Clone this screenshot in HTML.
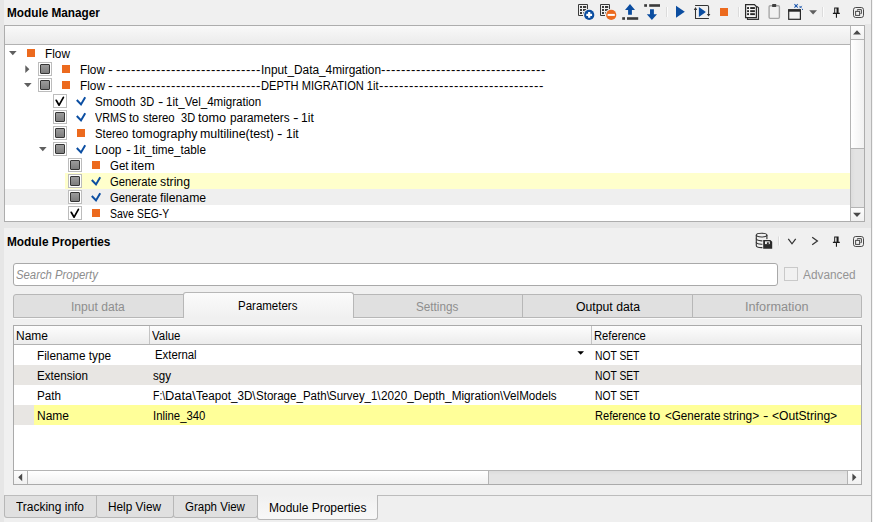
<!DOCTYPE html>
<html><head><meta charset="utf-8"><title>Module Manager</title>
<style>
html,body{margin:0;padding:0}
body{width:873px;height:522px;position:relative;overflow:hidden;background:#e6e6e6;font-family:"Liberation Sans",sans-serif;font-size:12px;color:#000}
div,span,svg,i{position:absolute;box-sizing:border-box}
.t{font-family:"Liberation Sans",sans-serif;font-size:12px;line-height:14px;height:14px;white-space:pre;transform-origin:0 0}
.dock{background:#f0f0f0}
.frame{border:1px solid #adadad;background:#fff}
.hdr{background:linear-gradient(#f9f9f9,#ebebeb);border-bottom:1px solid #b2b2b2}
.cb{width:14px;height:14px;border:1px solid #bcbcbc;background:#fff}
.cb i{left:1px;top:1px;width:10px;height:10px;border:1px solid #363636;border-radius:1px;background:linear-gradient(#9b9b9b,#7c7c7c)}
.or{width:8px;height:8px;background:#ec6a1e}
.sbtn{background:linear-gradient(#fdfdfd,#f1f1f1)}
.tab{background:#e0e0e0;border:1px solid #b7b7b7}

</style></head>
<body>
<!-- docks -->
<div class="dock" style="left:4px;top:0;width:867px;height:222px"></div>
<div class="dock" style="left:4px;top:228px;width:867px;height:267px"></div>
<div style="left:4px;top:495px;width:867px;height:1px;background:#bcbcbc"></div>
<div style="left:4px;top:496px;width:867px;height:26px;background:#efefef"></div>
<div style="left:871px;top:0;width:1px;height:522px;background:#b6b6b6"></div>
<div style="left:872px;top:0;width:1px;height:522px;background:#f4f4f4"></div>

<div style="left:865px;top:24px;width:6px;height:198px;background:#e7e7e7"></div>
<!-- tree frame -->
<div class="frame" style="left:4px;top:25px;width:861px;height:197px"></div>
<div class="hdr" style="left:5px;top:26px;width:845px;height:19px"></div>
<!-- tree row backgrounds -->
<div style="left:65px;top:173px;width:785px;height:16px;background:#ffffcc"></div>
<div style="left:5px;top:189px;width:845px;height:16px;background:#efefef"></div>
<!-- vertical scrollbar -->
<div style="left:850px;top:26px;width:1px;height:195px;background:#b4b4b4"></div>
<div class="sbtn" style="left:851px;top:26px;width:13px;height:13px"></div>
<div style="left:851px;top:39px;width:13px;height:1px;background:#b4b4b4"></div>
<div style="left:851px;top:40px;width:13px;height:108px;background:linear-gradient(90deg,#ffffff,#f1f1f1)"></div>
<div style="left:851px;top:148px;width:13px;height:1px;background:#b4b4b4"></div>
<div style="left:851px;top:149px;width:13px;height:58px;background:linear-gradient(90deg,#dcdcdc,#e3e3e3 4px)"></div>
<div style="left:851px;top:207px;width:13px;height:1px;background:#b4b4b4"></div>
<div class="sbtn" style="left:851px;top:208px;width:13px;height:13px"></div>
<svg style="left:851px;top:26px" width="13" height="195" viewBox="0 0 13 195"><path d="M2 8.4 L10 8.4 L6 4.2Z M2 186.8 L10 186.8 L6 191Z" fill="#4a4a4a"/></svg>
<!-- tree expanders -->
<svg style="left:5px;top:45px" width="60" height="176" viewBox="0 0 60 176">
 <g fill="#5f5f5f">
  <path d="M4 6 L11.6 6 L7.8 10.2Z"/>
  <path d="M20.3 20.3 L24.4 24.2 L20.3 28.1Z"/>
  <path d="M19 38 L26.6 38 L22.8 42.2Z"/>
  <path d="M34 102 L41.6 102 L37.8 106.2Z"/>
 </g>
</svg>
<!-- row 0 -->
<div class="or" style="left:27px;top:49px"></div>
<!-- row 1,2 -->
<div class="cb" style="left:38px;top:62px"><i></i></div><div class="or" style="left:62px;top:65px"></div>
<div class="cb" style="left:38px;top:78px"><i></i></div><div class="or" style="left:62px;top:81px"></div>
<!-- row 3..6 -->
<div class="cb" style="left:53px;top:94px"></div>
<div class="cb" style="left:53px;top:110px"><i></i></div>
<div class="cb" style="left:53px;top:126px"><i></i></div><div class="or" style="left:77px;top:129px"></div>
<div class="cb" style="left:53px;top:142px"><i></i></div>
<!-- row 7..10 -->
<div class="cb" style="left:68px;top:158px"><i></i></div><div class="or" style="left:92px;top:161px"></div>
<div class="cb" style="left:68px;top:174px"><i></i></div>
<div class="cb" style="left:68px;top:190px"><i></i></div>
<div class="cb" style="left:68px;top:206px"></div><div class="or" style="left:92px;top:209px"></div>
<!-- black check marks + blue check marks -->
<svg style="left:0;top:0" width="200" height="222" viewBox="0 0 200 222" fill="none" stroke-linecap="butt" stroke-linejoin="miter">
 <g stroke="#000" stroke-width="1.7" stroke-linecap="round" stroke-linejoin="round">
  <path d="M56.2 100.3 L59.1 105.2 L63.4 97.3"/>
  <path d="M71.2 212.3 L74.1 217.2 L78.4 209.3"/>
 </g>
 <g stroke="#0b4ea2" stroke-width="2">
  <path d="M76.8 100.0 L81.0 104.4 L85.2 97.2"/>
  <path d="M76.8 116.0 L81.0 120.4 L85.2 113.2"/>
  <path d="M76.8 148.0 L81.0 152.4 L85.2 145.2"/>
  <path d="M91.8 180.0 L96.0 184.4 L100.2 177.2"/>
  <path d="M91.8 196.0 L96.0 200.4 L100.2 193.2"/>
 </g>
</svg>
<!-- search box -->
<div style="left:13px;top:263px;width:765px;height:23px;border:1px solid #a9a9a9;border-radius:3px;background:#fff"></div>
<div style="left:784px;top:267px;width:14px;height:14px;border:1px solid #c9c9c9;background:#f1f1f1"></div>
<!-- property tabs -->
<div class="tab" style="left:13px;top:294px;width:171px;height:24px;border-radius:3px 0 0 0"></div>
<div class="tab" style="left:353px;top:294px;width:170px;height:24px;border-left-color:#c4c4c4"></div>
<div class="tab" style="left:522px;top:294px;width:171px;height:24px"></div>
<div class="tab" style="left:692px;top:294px;width:170px;height:24px;border-radius:0 3px 0 0"></div>
<div style="left:183px;top:292px;width:171px;height:26px;border:1px solid #b7b7b7;border-bottom:none;border-radius:3px 3px 0 0;background:linear-gradient(#fbfbfb,#f0f0f0)"></div>
<div style="left:13px;top:318px;width:170px;height:1px;background:#fafafa"></div>
<div style="left:354px;top:318px;width:508px;height:1px;background:#fafafa"></div>
<!-- table -->
<div class="frame" style="left:13px;top:325px;width:849px;height:160px;border-color:#aaa"></div>
<div class="hdr" style="left:14px;top:326px;width:847px;height:19px;background:linear-gradient(#fdfdfd,#ececec)"></div>
<div style="left:149px;top:326px;width:1px;height:18px;background:#c4c4c4"></div>
<div style="left:591px;top:326px;width:1px;height:18px;background:#c4c4c4"></div>
<div style="left:14px;top:365px;width:847px;height:20px;background:#e8e6e3"></div>
<div style="left:14px;top:405px;width:20px;height:20px;background:#e8e6e3"></div>
<div style="left:34px;top:405px;width:827px;height:20px;background:#ffff99"></div>
<svg style="left:576px;top:350px" width="10" height="6" viewBox="0 0 10 6"><path d="M1.4 1.2 L8 1.2 L4.7 4.8Z" fill="#000"/></svg>
<!-- horizontal scrollbar -->
<div style="left:14px;top:470px;width:847px;height:1px;background:#b4b4b4"></div>
<div class="sbtn" style="left:14px;top:471px;width:13px;height:13px"></div>
<div style="left:27px;top:471px;width:1px;height:13px;background:#b4b4b4"></div>
<div style="left:28px;top:471px;width:460px;height:13px;background:linear-gradient(#ffffff,#f1f1f1)"></div>
<div style="left:488px;top:471px;width:1px;height:13px;background:#b4b4b4"></div>
<div style="left:489px;top:471px;width:358px;height:13px;background:linear-gradient(#dcdcdc,#e4e4e4 4px)"></div>
<div style="left:847px;top:471px;width:1px;height:13px;background:#b4b4b4"></div>
<div class="sbtn" style="left:848px;top:471px;width:13px;height:13px"></div>
<svg style="left:14px;top:471px" width="847" height="13" viewBox="0 0 847 13"><path d="M8.2 2.4 L8.2 10.2 L4.2 6.3Z M838.4 2.4 L838.4 10.2 L842.4 6.3Z" fill="#4a4a4a"/></svg>
<!-- bottom tabs -->
<div class="tab" style="left:4px;top:495px;width:93px;height:23px;border-radius:0 0 3px 3px;border-top-color:#bcbcbc"></div>
<div class="tab" style="left:96px;top:495px;width:78px;height:23px;border-radius:0 0 3px 3px;border-top-color:#bcbcbc"></div>
<div class="tab" style="left:173px;top:495px;width:85px;height:23px;border-radius:0 0 3px 3px;border-top-color:#bcbcbc"></div>
<div style="left:257px;top:495px;width:121px;height:25px;border:1px solid #b7b7b7;border-top:none;border-radius:0 0 3px 3px;background:linear-gradient(#f0f0f0,#f8f8f8)"></div>
<!-- ===== top toolbar icons ===== -->
<svg style="left:570px;top:0" width="303" height="25" viewBox="570 0 303 25">
 <!-- grid+plus -->
 <g id="gridicon">
  <path d="M578.5 4.5 H587.5 V10 M578.5 4.5 V15.5 H583" fill="none" stroke="#3a3a3a" stroke-width="1"/>
  <g fill="#3a3a3a">
   <rect x="580" y="6" width="2" height="2"/><rect x="583" y="6" width="3.2" height="2"/>
   <rect x="580" y="9" width="2" height="2"/><rect x="583" y="9" width="3.2" height="2"/>
   <rect x="580" y="12" width="2" height="2"/><rect x="583" y="12" width="1.2" height="2"/>
  </g>
 </g>
 <circle cx="589.2" cy="14.9" r="6.1" fill="#f0f0f0"/><circle cx="589.2" cy="14.9" r="5.1" fill="#0b4da0"/>
 <path d="M586.3 14.9 H592.1 M589.2 12 V17.8" stroke="#fff" stroke-width="2.2" fill="none"/>
 <!-- grid+minus -->
 <use href="#gridicon" x="22"/>
 <circle cx="611.2" cy="14.9" r="6.1" fill="#f0f0f0"/><circle cx="611.2" cy="14.9" r="5.1" fill="#ec6a1e"/>
 <path d="M607.6 14.9 H614.8" stroke="#fff" stroke-width="2" fill="none"/>
 <!-- up arrow over line -->
 <path d="M630 4 L635 9.9 H631.9 V14.8 H628.1 V9.9 H625Z" fill="#0b4da0"/>
 <rect x="622.2" y="17.2" width="2.8" height="2.6" fill="#3a3a3a"/>
 <rect x="627" y="17.2" width="11.2" height="2.6" fill="#3a3a3a"/>
 <!-- down arrow under line -->
 <rect x="644.2" y="4.2" width="2.8" height="2.6" fill="#3a3a3a"/>
 <rect x="649.2" y="4.2" width="10.8" height="2.6" fill="#3a3a3a"/>
 <path d="M651.9 20 L646.8 14.2 H650 V9.2 H653.9 V14.2 H657Z" fill="#0b4da0"/>
 <!-- separator -->
 <rect x="666" y="7" width="1" height="10" fill="#dcdcdc"/><rect x="667" y="7" width="1" height="10" fill="#fbfbfb"/>
 <!-- play -->
 <path d="M676 5.8 L684.8 11.8 L676 17.8Z" fill="#0b4da0"/>
 <!-- run in box -->
 <path d="M695.5 8.6 V18.4 H708.9 M695.1 5.5 H707.4 Q708.6 5.5 708.6 6.7 V14.6" fill="none" stroke="#333" stroke-width="1.05"/>
 <path d="M693.8 9.9 L695.5 7.1 L697.2 9.9Z M706.8 13.9 L708.6 16.6 L710.4 13.9Z" fill="#333"/>
 <path d="M698.9 6.9 L705.9 11.9 L698.9 16.9Z" fill="#0b4da0"/>
 <!-- stop -->
 <rect x="720" y="8" width="8" height="8" fill="#ec6a1e"/>
 <!-- separator -->
 <rect x="738" y="7" width="1" height="10" fill="#dcdcdc"/><rect x="739" y="7" width="1" height="10" fill="#fbfbfb"/>
 <!-- docs/list -->
 <path d="M747.5 18 V19.4 H758.5 V7.8 L757 6.3" fill="none" stroke="#333" stroke-width="1.15"/>
 <path d="M745.6 4.6 H754.4 L756.4 6.6 V17.6 H745.6Z" fill="#f6f6f6" stroke="#2a2a2a" stroke-width="1.25"/>
 <g fill="#262626">
  <rect x="747.1" y="7.1" width="1.9" height="1.9"/><rect x="750.2" y="7.1" width="4.7" height="1.9"/>
  <rect x="747.1" y="10.2" width="1.9" height="1.9"/><rect x="750.2" y="10.2" width="4.7" height="1.9"/>
  <rect x="747.1" y="13.2" width="1.9" height="1.9"/><rect x="750.2" y="13.2" width="4.7" height="1.9"/>
 </g>
 <!-- clipboard (disabled) -->
 <rect x="769.1" y="5.7" width="10.3" height="12.6" rx="1.1" fill="#f1f1f1" stroke="#a6a6a6" stroke-width="1.35"/>
 <rect x="772.1" y="4" width="4.1" height="2.9" rx="0.4" fill="#404040"/>
 <!-- window + sparkles -->
 <rect x="788.7" y="10" width="11.7" height="9.3" fill="#f5f5f5" stroke="#2a2a2a" stroke-width="1.2"/>
 <rect x="788.1" y="9.2" width="12.9" height="2.5" fill="#2a2a2a"/>
 <path d="M794.4 4.2 L797.8 7.6 M797.8 4.2 L794.4 7.6" stroke="#2a62b4" stroke-width="1.1" fill="none"/>
 <rect x="795.2" y="5" width="1.8" height="1.8" fill="#1f57ad"/>
 <path d="M799.4 5.9 L801.8 8.3 M801.8 5.9 L799.4 8.3 M802 9 L803 10" stroke="#2a62b4" stroke-width="1" fill="none"/>
 <!-- dropdown -->
 <path d="M809.2 10.2 H817 L813.1 14.4Z" fill="#5f5f5f"/>
 <!-- separator -->
 <rect x="822" y="7" width="1" height="10" fill="#dcdcdc"/><rect x="823" y="7" width="1" height="10" fill="#fbfbfb"/>
 <!-- pin -->
 <g id="pin"><path d="M834.2 7.5 H838.6 V12.7 H839.8 V14 H837 V17.8 H835.9 V14 H832.9 V12.7 H834.2Z" fill="#1a1a1a"/><rect x="835.2" y="8.5" width="1.3" height="4.2" fill="#fafafa"/></g>
 <!-- float -->
 <g id="float" fill="none" stroke="#4a4a4a">
  <rect x="853.5" y="7.5" width="10" height="10" rx="2.2" stroke-width="1"/>
  <path d="M857.4 10.6 V9.6 H861.4 V13.6 H860.4" stroke-width="1"/>
  <rect x="855.6" y="11.4" width="4" height="4" stroke-width="1"/>
 </g>
</svg>
<!-- ===== properties toolbar icons ===== -->
<svg style="left:750px;top:228px" width="121" height="30" viewBox="750 228 121 30">
 <!-- database -->
 <g fill="none" stroke="#363636" stroke-width="1.15">
  <ellipse cx="761.6" cy="235.1" rx="5.3" ry="1.9"/>
  <path d="M756.3 235 V245.4 C756.3 246.9 758.6 247.6 761.6 247.6 H763 M766.9 235 V239.6"/>
  <path d="M756.3 238.6 C756.3 240 758.8 240.8 761.6 240.8 H763"/>
  <path d="M756.3 242 C756.3 243.5 758.8 244.2 761.6 244.2 H763"/>
 </g>
 <path d="M762.4 239.2 H770.8 L773 241.4 V249.6 H762.4Z" fill="#f0f0f0"/>
 <path d="M763.2 240 H770.4 L772.2 241.8 V248.8 H763.2Z" fill="#2b2b2b"/>
 <rect x="765" y="241.3" width="4.8" height="2.8" fill="#f0f0f0"/>
 <rect x="766.9" y="242.3" width="1.9" height="1.8" fill="#2b2b2b"/>
 <!-- separator -->
 <rect x="778" y="236.5" width="1" height="9" fill="#dcdcdc"/><rect x="779" y="236.5" width="1" height="9" fill="#fbfbfb"/>
 <!-- chevrons -->
 <path d="M788.3 238.9 L792 243.8 L795.7 238.9" fill="none" stroke="#333" stroke-width="1.25"/>
 <path d="M812.2 237.2 L817.4 241 L812.2 244.8" fill="none" stroke="#333" stroke-width="1.25"/>
 <use href="#pin" y="229"/>
 <use href="#float" y="229"/>
</svg>

<span class="t" style="left:7.3px;top:6px;transform:scaleX(0.9811);font-weight:bold;">Module Manager</span>
<span class="t" style="left:7.0px;top:235px;transform:scaleX(0.9877);font-weight:bold;">Module Properties</span>
<span class="t" style="left:45.2px;top:47px;transform:scaleX(0.9864);">Flow</span>
<span class="t" style="left:80.2px;top:63px;transform:scaleX(0.9864);">Flow</span>
<span class="t" style="left:108.4px;top:63px;transform:scaleX(1.2000);">-</span>
<span class="t" style="left:115.8px;top:63px;transform:scaleX(1.0998);letter-spacing:0.55px;">-----------------------------</span>
<span class="t" style="left:261.4px;top:63px;transform:scaleX(0.9883);">Input_Data_4mirgation</span>
<span class="t" style="left:380.6px;top:63px;transform:scaleX(1.0998);letter-spacing:0.55px;">---------------------------------</span>
<span class="t" style="left:80.2px;top:79px;transform:scaleX(0.9864);">Flow</span>
<span class="t" style="left:108.4px;top:79px;transform:scaleX(1.2000);">-</span>
<span class="t" style="left:115.8px;top:79px;transform:scaleX(1.0998);letter-spacing:0.55px;">-----------------------------</span>
<span class="t" style="left:261.4px;top:79px;transform:scaleX(0.9251);">DEPTH MIGRATION 1it</span>
<span class="t" style="left:378.9px;top:79px;transform:scaleX(1.0998);letter-spacing:0.55px;">---------------------------------</span>
<span class="t" style="left:95.3px;top:95px;transform:scaleX(0.9768);">Smooth</span>
<span class="t" style="left:139.6px;top:95px;transform:scaleX(0.9189);">3D</span>
<span class="t" style="left:157.6px;top:95px;transform:scaleX(1.3250);">-</span>
<span class="t" style="left:166.0px;top:95px;transform:scaleX(0.9642);">1it_Vel_4migration</span>
<span class="t" style="left:94.8px;top:111px;transform:scaleX(0.8999);">VRMS</span>
<span class="t" style="left:129.1px;top:111px;transform:scaleX(1.0084);">to</span>
<span class="t" style="left:143.1px;top:111px;transform:scaleX(0.9503);">stereo</span>
<span class="t" style="left:181.0px;top:111px;transform:scaleX(0.9189);">3D</span>
<span class="t" style="left:198.1px;top:111px;transform:scaleX(1.0529);">tomo</span>
<span class="t" style="left:229.7px;top:111px;transform:scaleX(0.9835);">parameters</span>
<span class="t" style="left:292.9px;top:111px;transform:scaleX(1.4000);">-</span>
<span class="t" style="left:301.1px;top:111px;transform:scaleX(1.0089);">1it</span>
<span class="t" style="left:95.3px;top:127px;transform:scaleX(0.9418);">Stereo</span>
<span class="t" style="left:131.7px;top:127px;transform:scaleX(1.0335);">tomography</span>
<span class="t" style="left:200.2px;top:127px;transform:scaleX(1.0356);">multiline(test)</span>
<span class="t" style="left:277.4px;top:127px;transform:scaleX(1.3500);">-</span>
<span class="t" style="left:285.9px;top:127px;transform:scaleX(1.0010);">1it</span>
<span class="t" style="left:95.3px;top:143px;transform:scaleX(0.9924);">Loop</span>
<span class="t" style="left:125.5px;top:143px;transform:scaleX(1.2000);">-</span>
<span class="t" style="left:133.2px;top:143px;transform:scaleX(0.9757);">1it_time_table</span>
<span class="t" style="left:110.2px;top:159px;transform:scaleX(0.9564);">Get</span>
<span class="t" style="left:131.2px;top:159px;transform:scaleX(1.0409);">item</span>
<span class="t" style="left:110.2px;top:175px;transform:scaleX(0.9371);">Generate</span>
<span class="t" style="left:160.1px;top:175px;transform:scaleX(1.0224);">string</span>
<span class="t" style="left:110.2px;top:191px;transform:scaleX(0.9371);">Generate</span>
<span class="t" style="left:160.1px;top:191px;transform:scaleX(1.0163);">filename</span>
<span class="t" style="left:110.2px;top:207px;transform:scaleX(0.8736);">Save</span>
<span class="t" style="left:136.8px;top:207px;transform:scaleX(0.8623);">SEG-Y</span>
<span class="t" style="left:16.2px;top:268px;transform:scaleX(0.9433);color:#8c8c8c;font-style:italic;">Search Property</span>
<span class="t" style="left:803.0px;top:268px;transform:scaleX(0.9855);color:#949494;">Advanced</span>
<span class="t" style="left:71.0px;top:300px;transform:scaleX(1.0077);color:#8e8e8e;">Input data</span>
<span class="t" style="left:238.0px;top:299px;transform:scaleX(0.9576);">Parameters</span>
<span class="t" style="left:415.8px;top:300px;transform:scaleX(0.9779);color:#8e8e8e;">Settings</span>
<span class="t" style="left:575.5px;top:300px;transform:scaleX(1.0204);">Output data</span>
<span class="t" style="left:744.5px;top:300px;transform:scaleX(1.0578);color:#8e8e8e;">Information</span>
<span class="t" style="left:16.0px;top:329px;transform:scaleX(0.9995);">Name</span>
<span class="t" style="left:152.0px;top:329px;transform:scaleX(0.9526);">Value</span>
<span class="t" style="left:594.2px;top:329px;transform:scaleX(0.9354);">Reference</span>
<span class="t" style="left:37.0px;top:349px;transform:scaleX(0.9818);">Filename type</span>
<span class="t" style="left:37.0px;top:369px;transform:scaleX(0.9677);">Extension</span>
<span class="t" style="left:37.0px;top:389px;transform:scaleX(0.9722);">Path</span>
<span class="t" style="left:37.0px;top:409px;transform:scaleX(0.9995);">Name</span>
<span class="t" style="left:155.4px;top:348px;transform:scaleX(0.9448);">External</span>
<span class="t" style="left:153.0px;top:369px;transform:scaleX(0.9632);">sgy</span>
<span class="t" style="left:153.0px;top:389px;transform:scaleX(0.8714);">F:\</span>
<span class="t" style="left:165.2px;top:389px;transform:scaleX(1.0702);">Data\</span>
<span class="t" style="left:195.9px;top:389px;transform:scaleX(0.9708);">Teapot_3D\</span>
<span class="t" style="left:255.5px;top:389px;transform:scaleX(0.9631);">Storage_Path\</span>
<span class="t" style="left:329.4px;top:389px;transform:scaleX(0.9532);">Survey_1\</span>
<span class="t" style="left:380.9px;top:389px;transform:scaleX(0.9802);">2020_Depth_Migration\</span>
<span class="t" style="left:503.2px;top:389px;transform:scaleX(0.9679);">VelModels</span>
<span class="t" style="left:153.0px;top:409px;transform:scaleX(0.9460);">Inline_340</span>
<span class="t" style="left:595.0px;top:349px;transform:scaleX(0.8572);">NOT SET</span>
<span class="t" style="left:595.0px;top:369px;transform:scaleX(0.8572);">NOT SET</span>
<span class="t" style="left:595.0px;top:389px;transform:scaleX(0.8572);">NOT SET</span>
<span class="t" style="left:595.1px;top:409px;transform:scaleX(0.9210);">Reference</span>
<span class="t" style="left:649.1px;top:409px;transform:scaleX(1.1282);">to</span>
<span class="t" style="left:664.5px;top:409px;transform:scaleX(0.9711);">&lt;Generate</span>
<span class="t" style="left:722.6px;top:409px;transform:scaleX(0.9929);">string&gt;</span>
<span class="t" style="left:763.1px;top:409px;transform:scaleX(1.3500);">-</span>
<span class="t" style="left:771.8px;top:409px;transform:scaleX(1.0074);">&lt;OutString&gt;</span>
<span class="t" style="left:15.6px;top:500px;transform:scaleX(0.9963);">Tracking info</span>
<span class="t" style="left:108.0px;top:500px;transform:scaleX(0.9849);">Help View</span>
<span class="t" style="left:185.0px;top:500px;transform:scaleX(0.9586);">Graph View</span>
<span class="t" style="left:269.0px;top:501px;transform:scaleX(1.0001);">Module Properties</span>
</body></html>
